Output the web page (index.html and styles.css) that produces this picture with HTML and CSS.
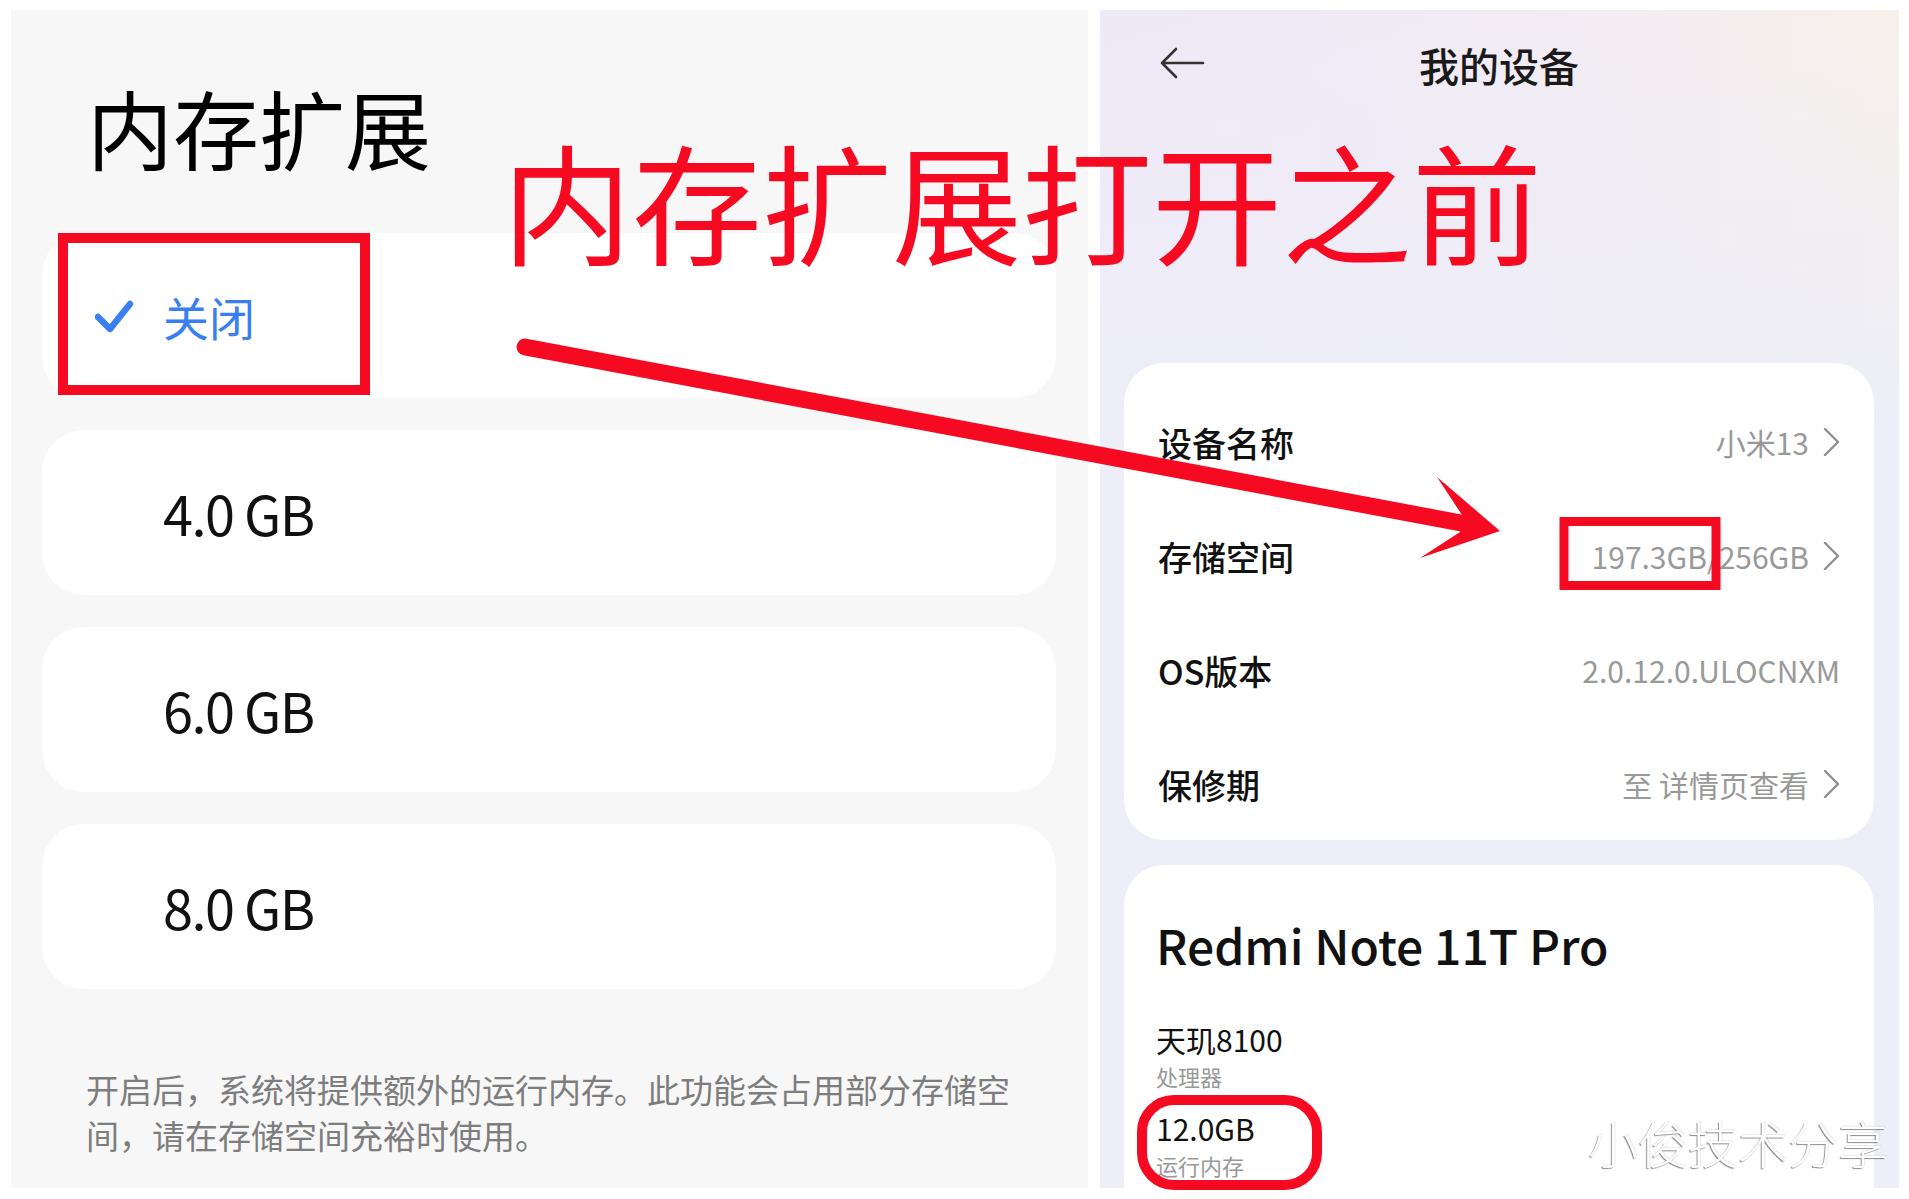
FILE: index.html
```html
<!DOCTYPE html>
<html lang="zh-CN">
<head>
    <meta charset="UTF-8">
    <meta name="viewport" content="width=device-width, initial-scale=1.0">
    <title>内存扩展 - 我的设备</title>
    <link rel="stylesheet" href="styles.css">
</head>
<body>
    <div class="page">
        <section class="panel panel-left">
            <h1 class="title">内存扩展</h1>
            <ul class="options">
                <li class="option selected">
                    <span class="option-mark">
                        <svg width="40" height="36" viewBox="0 0 40 36"><path d="M3 19 L15 31 L35 6" fill="none" stroke="#3a7ff1" stroke-width="6.5" stroke-linecap="round" stroke-linejoin="round"/></svg>
                    </span>
                    <span>关闭</span>
                </li>
                <li class="option"><span class="option-mark"></span><span>4.0 GB</span></li>
                <li class="option"><span class="option-mark"></span><span>6.0 GB</span></li>
                <li class="option"><span class="option-mark"></span><span>8.0 GB</span></li>
            </ul>
            <p class="note">开启后，系统将提供额外的运行内存。此功能会占用部分存储空间，请在存储空间充裕时使用。</p>
        </section>

        <section class="panel panel-right">
            <header class="topbar">
                <svg class="back" width="46" height="32" viewBox="0 0 46 32"><path d="M44 16 H3 M17 2 L3 16 L17 30" fill="none" stroke="#333" stroke-width="2.6" stroke-linecap="round" stroke-linejoin="round"/></svg>
                <h2 class="topbar-title">我的设备</h2>
                <span></span>
            </header>

            <div class="card info-list">
                <div class="info-row">
                    <span class="info-label">设备名称</span>
                    <span class="info-value">小米13<svg class="chevron" width="17" height="28" viewBox="0 0 17 28"><path d="M2 1 L15 14 L2 27" fill="none" stroke="#8e8e8e" stroke-width="2.4" stroke-linecap="round" stroke-linejoin="round"/></svg></span>
                </div>
                <div class="info-row">
                    <span class="info-label">存储空间</span>
                    <span class="info-value">197.3GB/256GB<svg class="chevron" width="17" height="28" viewBox="0 0 17 28"><path d="M2 1 L15 14 L2 27" fill="none" stroke="#8e8e8e" stroke-width="2.4" stroke-linecap="round" stroke-linejoin="round"/></svg></span>
                </div>
                <div class="info-row">
                    <span class="info-label">OS版本</span>
                    <span class="info-value">2.0.12.0.ULOCNXM</span>
                </div>
                <div class="info-row">
                    <span class="info-label">保修期</span>
                    <span class="info-value">至 详情页查看<svg class="chevron" width="17" height="28" viewBox="0 0 17 28"><path d="M2 1 L15 14 L2 27" fill="none" stroke="#8e8e8e" stroke-width="2.4" stroke-linecap="round" stroke-linejoin="round"/></svg></span>
                </div>
            </div>

            <div class="card device">
                <h3 class="device-name">Redmi Note 11T Pro</h3>
                <div class="spec">
                    <div class="spec-value">天玑8100</div>
                    <div class="spec-label">处理器</div>
                </div>
                <div class="spec">
                    <div class="spec-value">12.0GB</div>
                    <div class="spec-label">运行内存</div>
                </div>
            </div>
        </section>

        <div class="annotation">内存扩展打开之前</div>

        <svg class="marks" width="1909" height="1199" viewBox="0 0 1909 1199">
            <g fill="none" stroke="#f60a22">
                <rect x="63" y="238" width="302" height="152" stroke-width="10"/>
                <rect x="1564" y="521.5" width="152" height="64" stroke-width="9"/>
                <rect x="1142" y="1100" width="175" height="85" rx="32" stroke-width="10"/>
                <path d="M525 347 L1461 523" stroke-width="17" stroke-linecap="round"/>
            </g>
            <polygon points="1462,515 1437,477 1500,531 1420,558 1460,532" fill="#f60a22"/>
        </svg>

        <div class="watermark">小俊技术分享</div>
    </div>
</body>
</html>
```

FILE: styles.css
```css
:root {
    --red: #f60a22;
    --blue: #3a7ff1;
    --text: #111;
    --muted: #999;
}

body {
    margin: 0;
    background: #fff;
    font-family: "Noto Sans CJK SC", "Noto Sans", sans-serif;
}

.page {
    position: relative;
    width: 1909px;
    height: 1199px;
    box-sizing: border-box;
    padding: 10px 10px 11px 11px;
    display: flex;
    gap: 12px;
    overflow: hidden;
}

.panel {
    height: 1178px;
    box-sizing: border-box;
    overflow: hidden;
}

/* left: memory extension */
.panel-left {
    width: 1077px;
    background: #f7f7f7;
    padding: 74px 32px 0 31px;
}

.title {
    margin: 0 0 63px 45px;
    font-size: 86px;
    line-height: 86px;
    font-weight: 400;
    color: #000;
}

.options {
    list-style: none;
    margin: 0;
    padding: 0;
    display: flex;
    flex-direction: column;
    gap: 32px;
}

.option {
    height: 165px;
    background: #fff;
    border-radius: 42px;
    display: flex;
    align-items: center;
    padding-left: 53px;
    font-size: 54px;
    letter-spacing: -1.5px;
    color: var(--text);
}

.option-mark {
    width: 68px;
    display: flex;
    align-items: center;
}

.option.selected {
    color: var(--blue);
    font-size: 46px;
    letter-spacing: 0;
}

.note {
    margin: 77px 0 0 44px;
    width: 930px;
    font-size: 33px;
    line-height: 46px;
    color: #7d7d7d;
}

/* right: my device */
.panel-right {
    flex: 1;
    padding: 35px 25px 0 24px;
    background:
        linear-gradient(180deg, rgba(237, 238, 248, 0) 0, #edeef8 430px),
        linear-gradient(90deg, #eee9f7 0%, #f2ebf4 55%, #f7f0ea 100%);
}

.topbar {
    height: 40px;
    display: grid;
    grid-template-columns: 1fr auto 1fr;
    align-items: center;
    padding: 0 35px;
}

.back {
    display: block;
    margin-top: -4px;
}

.topbar-title {
    margin: 0;
    font-size: 40px;
    line-height: 40px;
    font-weight: 500;
    color: #1a1a1a;
}

.card {
    background: #fff;
    border-radius: 40px;
}

.info-list {
    margin-top: 278px;
    padding-top: 22px;
    height: 477px;
    box-sizing: border-box;
}

.info-row {
    height: 114px;
    display: flex;
    align-items: center;
    justify-content: space-between;
    padding: 0 34px 0 34px;
}

.info-label {
    font-size: 34px;
    font-weight: 500;
    color: var(--text);
}

.info-value {
    display: flex;
    align-items: center;
    font-size: 30px;
    color: var(--muted);
}

.chevron {
    display: block;
    margin-left: 14px;
}

.device {
    margin-top: 25px;
    height: 400px;
    padding: 49px 32px 0;
}

.device-name {
    margin: 0;
    font-size: 48px;
    line-height: 60px;
    font-weight: 500;
    color: var(--text);
}

.spec {
    margin-top: 23px;
}

.device-name + .spec {
    margin-top: 49px;
}

.spec-value {
    font-size: 30px;
    line-height: 32px;
    color: var(--text);
}

.spec-label {
    margin-top: 8px;
    font-size: 22px;
    line-height: 26px;
    color: var(--muted);
}

/* annotations on top of the screenshots */
.annotation {
    position: absolute;
    left: 502px;
    top: 133px;
    font-size: 130px;
    line-height: 130px;
    color: var(--red);
    white-space: nowrap;
}

.marks {
    position: absolute;
    left: 0;
    top: 0;
    pointer-events: none;
}

.watermark {
    position: absolute;
    left: 1588px;
    top: 1117px;
    font-size: 50px;
    line-height: 50px;
    font-weight: 300;
    color: #fff;
    white-space: nowrap;
    text-shadow: -1px 1px 1px rgba(0, 0, 0, 0.45), 1px -1px 0 rgba(0, 0, 0, 0.08);
}
```
